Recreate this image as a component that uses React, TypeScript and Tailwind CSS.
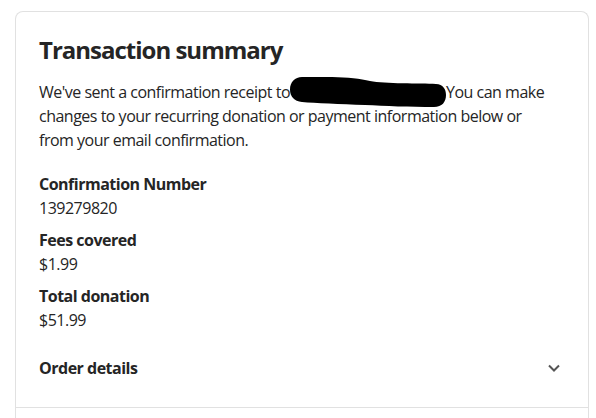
import React from 'react';

const Redaction: React.FC = () => (
  <svg
    width="156"
    height="30"
    viewBox="0 0 156 30"
    className="inline-block align-top -my-[3px]"
    aria-hidden="true"
  >
    <path
      d="M12 0 C40 -0.5 65 0 80 4 C95 7 130 6 146 7 C153 7.5 156 12 156 18 C156 25 152 30 144 30 C120 30 95 29 75 28 C50 27 25 26 12 25 C4 24.5 0 19 0 12.5 C0 5 5 0.2 12 0 Z"
      fill="#000"
    />
  </svg>
);

const Field: React.FC<{ label: string; value: string }> = ({ label, value }) => (
  <div>
    <div className="font-bold">{label}</div>
    <div>{value}</div>
  </div>
);

export default function App() {
  return (
    <div className="min-h-screen bg-white pt-[11px] pl-[15px] pr-[7px]">
      <div
        className="rounded-t-lg border border-b-0 border-[#e1e1e1] bg-white text-[#252525] text-[16px] leading-6 tracking-[-0.5px]"
        style={{ fontFamily: '"Open Sans", "Noto Sans", sans-serif' }}
      >
        <div className="px-[23px] pt-[22px]">
          <h2 className="text-[24px] leading-8 font-bold tracking-[-1px]">Transaction summary</h2>
          <p className="mt-[14px]">
            We've sent a confirmation receipt to
            <Redaction />
            You can make changes to your recurring donation or payment information below or
            <br />
            from your email confirmation.
          </p>
          <div className="mt-5 flex flex-col gap-2">
            <Field label="Confirmation Number" value="139279820" />
            <Field label="Fees covered" value="$1.99" />
            <Field label="Total donation" value="$51.99" />
          </div>
          <button className="w-full flex items-center justify-between pt-6 pb-[27px] text-left">
            <span className="font-bold">Order details</span>
            <svg width="14" height="10" viewBox="0 0 14 10" className="mr-[4px]" aria-hidden="true">
              <path d="M2 2.5 L7 7.5 L12 2.5" fill="none" stroke="#555" strokeWidth="2" />
            </svg>
          </button>
        </div>
        <div className="border-t border-[#e1e1e1] h-[12px]" />
      </div>
    </div>
  );
}
